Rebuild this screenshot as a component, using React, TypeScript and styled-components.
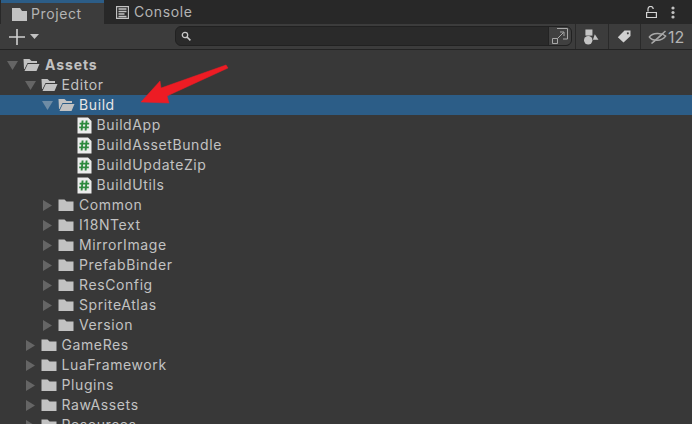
import React from "react";
import styled, { createGlobalStyle } from "styled-components";

const GlobalStyle = createGlobalStyle`
  html, body {
    margin: 0;
    padding: 0;
    background: #383838;
  }
  body {
    font-family: Inter, "Liberation Sans", sans-serif;
  }
`;

type NodeKind = "root" | "open" | "closed" | "script";

type TreeNode = {
  name: string;
  depth: number;
  kind: NodeKind;
  selected?: boolean;
};

const nodes: TreeNode[] = [
  { name: "Assets", depth: 0, kind: "root" },
  { name: "Editor", depth: 1, kind: "open" },
  { name: "Build", depth: 2, kind: "open", selected: true },
  { name: "BuildApp", depth: 3, kind: "script" },
  { name: "BuildAssetBundle", depth: 3, kind: "script" },
  { name: "BuildUpdateZip", depth: 3, kind: "script" },
  { name: "BuildUtils", depth: 3, kind: "script" },
  { name: "Common", depth: 2, kind: "closed" },
  { name: "I18NText", depth: 2, kind: "closed" },
  { name: "MirrorImage", depth: 2, kind: "closed" },
  { name: "PrefabBinder", depth: 2, kind: "closed" },
  { name: "ResConfig", depth: 2, kind: "closed" },
  { name: "SpriteAtlas", depth: 2, kind: "closed" },
  { name: "Version", depth: 2, kind: "closed" },
  { name: "GameRes", depth: 1, kind: "closed" },
  { name: "LuaFramework", depth: 1, kind: "closed" },
  { name: "Plugins", depth: 1, kind: "closed" },
  { name: "RawAssets", depth: 1, kind: "closed" },
  { name: "Resources", depth: 1, kind: "closed" },
];

function FolderClosed() {
  return (
    <svg width="16" height="14" viewBox="0 0 16 14">
      <path d="M0.5 1.5 h6 l2 2 h7 v9.5 h-15 z" fill="#c2c2c2" />
    </svg>
  );
}

function FolderOpen() {
  return (
    <svg width="17" height="14" viewBox="0 0 17 14">
      <path d="M0.5 1 h6 l2 2 h5.5 v2 h-9.5 l-3 6 h-0.5 z" fill="#c2c2c2" />
      <path d="M4.8 6 h11.7 l-3 7 h-12 z" fill="#c2c2c2" />
    </svg>
  );
}

function ScriptIcon() {
  return (
    <svg width="15" height="17" viewBox="0 0 15 17">
      <path d="M0.5 0.5 h10.5 l3.5 3.5 v12.5 h-14 z" fill="#ececec" />
      <path
        d="M5.6 3.5 l-1 10 M9.6 3.5 l-1 10 M2.6 6.6 h9.6 M2.2 10.4 h9.6"
        stroke="#2f8a3f"
        strokeWidth="1.9"
        fill="none"
      />
    </svg>
  );
}

function renderIcon(kind: NodeKind) {
  if (kind === "script") return <ScriptIcon />;
  if (kind === "closed") return <FolderClosed />;
  return <FolderOpen />;
}

export default function App() {
  return (
    <Window>
      <GlobalStyle />
      <TabBar>
        <ActiveTab>
          <svg width="15" height="13" viewBox="0 0 15 13">
            <path d="M0 0 h8 l2 3 h5 v10 h-15 z" fill="#c2c2c2" />
          </svg>
          <TabLabel>Project</TabLabel>
        </ActiveTab>
        <Tab>
          <svg width="13" height="13" viewBox="0 0 13 13">
            <path
              d="M0.5 0.5 h12 v12 h-12 z M2.5 3 h8 M2.5 5.5 h8 M2.5 8 h6 M2.5 10.5 h8"
              fill="none"
              stroke="#c2c2c2"
              strokeWidth="1.3"
            />
          </svg>
          <TabLabel>Console</TabLabel>
        </Tab>
        <TabActions>
          <svg width="11" height="12" viewBox="0 0 11 12">
            <path
              d="M2 5.5 V3 a2.6 2.6 0 0 1 5.2 0 M0.6 6.5 h9.8 v5 h-9.8 z"
              fill="none"
              stroke="#d4d4d4"
              strokeWidth="1.2"
            />
          </svg>
          <svg width="4" height="13" viewBox="0 0 4 13">
            <circle cx="2" cy="2" r="1.6" fill="#c2c2c2" />
            <circle cx="2" cy="6.5" r="1.6" fill="#c2c2c2" />
            <circle cx="2" cy="11" r="1.6" fill="#c2c2c2" />
          </svg>
        </TabActions>
      </TabBar>

      <Toolbar>
        <CreateButton>
          <svg width="16" height="16" viewBox="0 0 16 16">
            <path d="M8 0 v16 M0 8 h16" stroke="#d0d0d0" strokeWidth="1.6" />
          </svg>
          <svg width="9" height="5" viewBox="0 0 9 5">
            <path d="M0 0 h9 l-4.5 5 z" fill="#c2c2c2" />
          </svg>
        </CreateButton>
        <SearchBox>
          <svg width="10" height="10" viewBox="0 0 10 10">
            <circle cx="4" cy="4" r="2.7" fill="none" stroke="#c8c8c8" strokeWidth="1.3" />
            <path d="M6 6 L9.4 9.4" stroke="#c8c8c8" strokeWidth="1.6" />
          </svg>
          <SearchField />
          <SearchWindowButton>
            <svg width="16" height="16" viewBox="0 0 16 16">
              <path
                d="M5 0.5 h10.5 v10.5 h-4.5 M0.5 10.5 h5 v5 h-5 z M5.5 10.5 L11.5 4.5 M8 4 h4 v4"
                fill="none"
                stroke="#a8a8a8"
                strokeWidth="1"
              />
            </svg>
          </SearchWindowButton>
        </SearchBox>
        <ToolButton>
          <svg width="15" height="16" viewBox="0 0 16 16">
            <rect x="1.5" y="0" width="7.5" height="6.5" fill="#c4c4c4" />
            <circle cx="4.5" cy="11.5" r="4.5" fill="#c4c4c4" />
            <path d="M11.5 5 L15.5 11 H9.5 z" fill="#c4c4c4" />
          </svg>
        </ToolButton>
        <ToolButton>
          <svg width="14" height="13" viewBox="0 0 14 13">
            <path
              d="M7.5 0.5 H13.5 V6 L6.5 12.5 L0.8 7.2 z M10.8 2.2 a1 1 0 1 0 0.1 0 z"
              fill="#d0d0d0"
              fillRule="evenodd"
            />
          </svg>
        </ToolButton>
        <HiddenCount>
          <svg width="19" height="14" viewBox="0 0 18 14">
            <path
              d="M0.8 7 C4 2.5 13 2.5 17.2 6 C13 11.5 4 11.5 0.8 7 z"
              fill="none"
              stroke="#a8a8a8"
              strokeWidth="1.3"
            />
            <path d="M3 13.5 L17 1" stroke="#a8a8a8" strokeWidth="1.5" />
            <path d="M5 12.5 L15 3.5" stroke="#a8a8a8" strokeWidth="1" />
          </svg>
          12
        </HiddenCount>
      </Toolbar>

      <Tree>
        {nodes.map((node) => (
          <Row key={node.name} $depth={node.depth} $selected={!!node.selected}>
            <Toggle>
              {node.kind === "closed" && (
                <svg width="9" height="11" viewBox="0 0 9 11">
                  <path d="M0 0 L9 5.5 L0 11 z" fill="#656565" />
                </svg>
              )}
              {(node.kind === "open" || node.kind === "root") && (
                <svg width="11" height="9" viewBox="0 0 11 9">
                  <path d="M0 0 H11 L5.5 9 z" fill={node.selected ? "#6f8ca5" : "#656565"} />
                </svg>
              )}
            </Toggle>
            <IconSlot $script={node.kind === "script"}>{renderIcon(node.kind)}</IconSlot>
            <Label $bold={node.kind === "root"} $selected={!!node.selected}>
              {node.name}
            </Label>
          </Row>
        ))}
      </Tree>

      <Arrow width="692" height="424" viewBox="0 0 692 424">
        <path
          d="M141 102 L160 81 L161 88 L226 65 L228 68 L167 96 L169 103 z"
          fill="#ed1c24"
          stroke="#ed1c24"
          strokeWidth="0.5"
          strokeLinejoin="round"
        />
      </Arrow>
    </Window>
  );
}

const Window = styled.div`
  position: relative;
  width: 692px;
  height: 424px;
  overflow: hidden;
  background: #383838;
`;

const TabBar = styled.div`
  display: flex;
  align-items: stretch;
  height: 24px;
  background: #282828;
`;

const ActiveTab = styled.div`
  display: flex;
  align-items: center;
  gap: 4px;
  box-sizing: border-box;
  width: 103px;
  margin-left: 1px;
  padding: 1px 0 0 11px;
  border-top: 3px solid #2c5d87;
  background: #3c3c3c;
`;

const Tab = styled.div`
  display: flex;
  align-items: center;
  gap: 5px;
  padding: 1px 0 0 12px;
`;

const TabLabel = styled.span`
  margin-bottom: 2px;
  color: #b4b4b4;
  font-size: 14px;
  letter-spacing: 0.6px;
`;

const TabActions = styled.div`
  display: flex;
  align-items: center;
  gap: 14px;
  margin-left: auto;
  padding: 0 17px 0 0;
`;

const Toolbar = styled.div`
  display: flex;
  align-items: stretch;
  box-sizing: border-box;
  height: 26px;
  padding-left: 1px;
  background: #3c3c3c;
  border-bottom: 1px solid #232323;
`;

const CreateButton = styled.div`
  display: flex;
  align-items: center;
  gap: 5px;
  width: 174px;
  padding-left: 8px;
  box-sizing: border-box;
`;

const SearchBox = styled.div`
  display: flex;
  align-items: center;
  align-self: flex-start;
  box-sizing: border-box;
  width: 397px;
  height: 20px;
  margin: 2px 3px 0 0;
  padding-left: 5px;
  gap: 2px;
  border-radius: 6px;
  background: #2a2a2a;
  border: 1px solid #212121;
  overflow: hidden;
`;

const SearchField = styled.div`
  flex: 1;
`;

const SearchWindowButton = styled.div`
  display: flex;
  align-items: center;
  justify-content: center;
  width: 22px;
  height: 100%;
  background: #404040;
  border-left: 1px solid #232323;
`;

const ToolButton = styled.div`
  display: flex;
  align-items: center;
  justify-content: center;
  box-sizing: border-box;
  width: 32.5px;
  border-left: 1px solid #2a2a2a;
`;

const HiddenCount = styled.div`
  display: flex;
  align-items: center;
  gap: 1px;
  flex: 1;
  padding-left: 7px;
  border-left: 1px solid #2a2a2a;
  color: #b4b4b4;
  font-size: 16px;
`;

const Tree = styled.div`
  padding-top: 5px;
`;

const Row = styled.div<{ $depth: number; $selected: boolean }>`
  display: flex;
  align-items: center;
  height: 20px;
  padding-left: ${(p) => 6 + p.$depth * 17.5}px;
  background: ${(p) => (p.$selected ? "#2c5d87" : "transparent")};
`;

const Toggle = styled.div`
  display: flex;
  align-items: center;
  justify-content: center;
  flex: none;
  width: 13px;
`;

const IconSlot = styled.div<{ $script: boolean }>`
  display: flex;
  align-items: center;
  flex: none;
  width: 21px;
  margin-left: ${(p) => (p.$script ? "5px" : "4px")};
  margin-right: ${(p) => (p.$script ? "-1px" : "0")};
`;

const Label = styled.span<{ $bold: boolean; $selected: boolean }>`
  margin-bottom: 2px;
  margin-left: ${(p) => (p.$bold ? "1px" : "0")};
  color: ${(p) => (p.$selected ? "#e6e6e6" : "#c2c2c2")};
  font-size: 14px;
  font-weight: ${(p) => (p.$bold ? 700 : 400)};
  letter-spacing: ${(p) => (p.$bold ? "0.9px" : "0.6px")};
  white-space: nowrap;
`;

const Arrow = styled.svg`
  position: absolute;
  top: 0;
  left: 0;
  pointer-events: none;
`;
